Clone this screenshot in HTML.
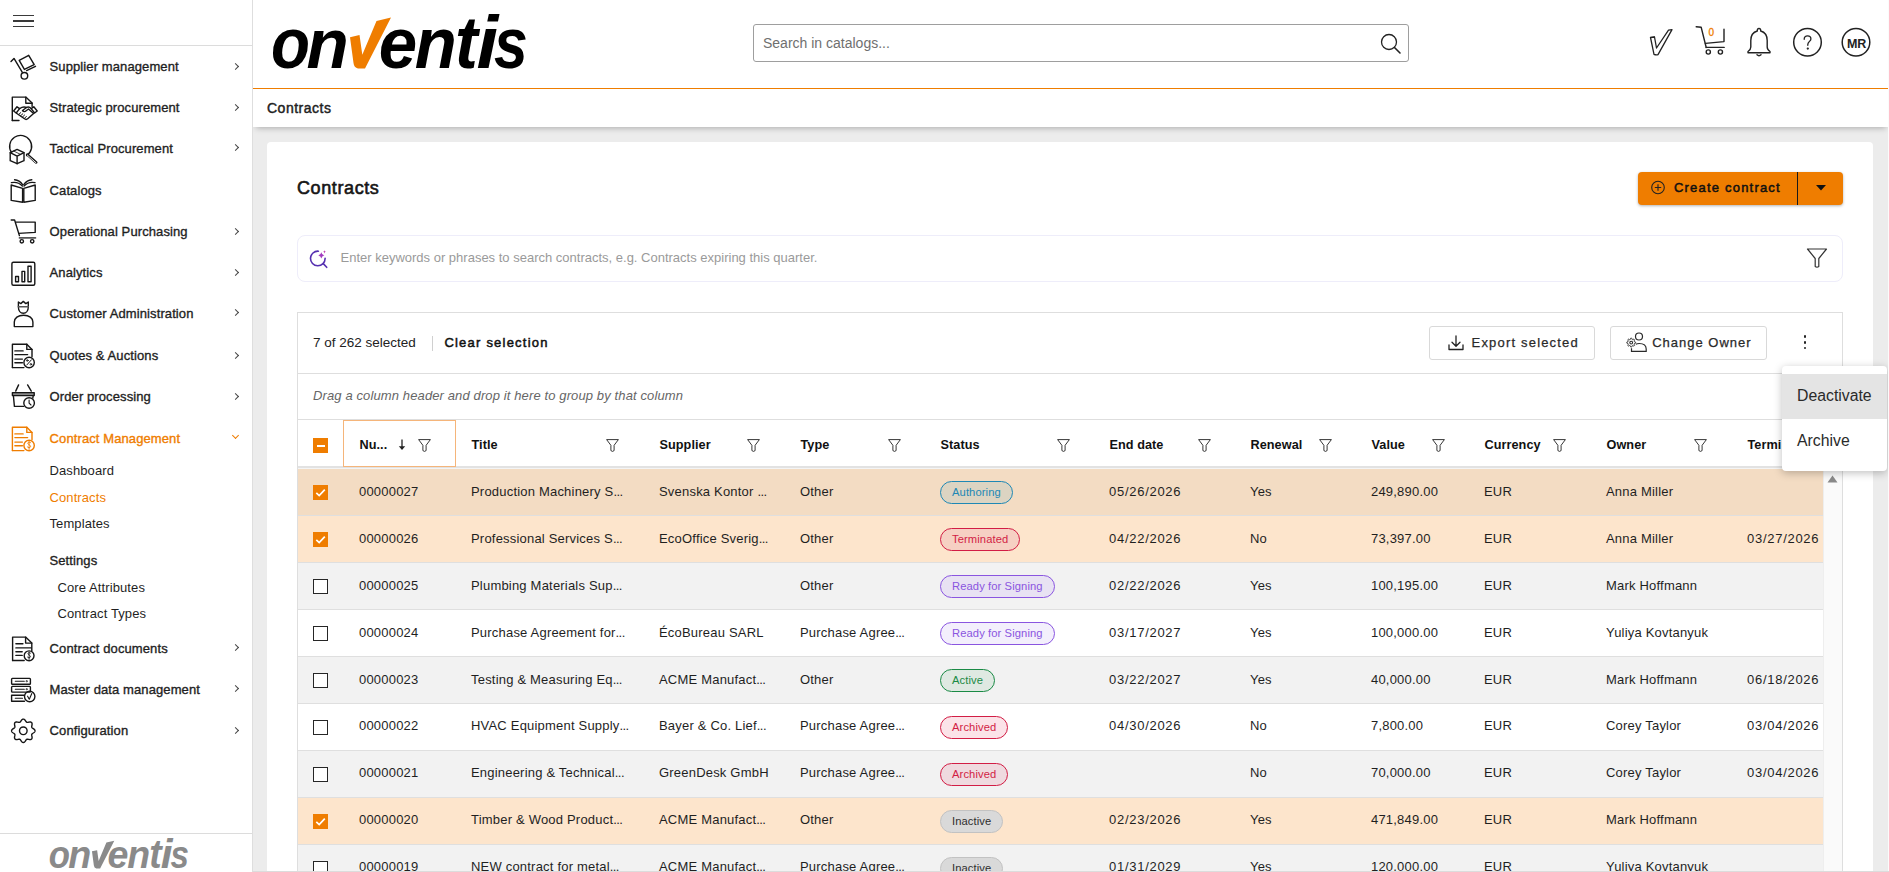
<!DOCTYPE html><html><head><meta charset="utf-8"><style>
*{box-sizing:border-box;margin:0;padding:0}
html,body{width:1889px;height:872px;overflow:hidden;background:#ececec;font-family:"Liberation Sans",sans-serif;color:#1f1f1f}
.abs{position:absolute;white-space:nowrap}
#side{position:absolute;left:0;top:0;width:253px;height:872px;background:#fff;border-right:1px solid #dedede;z-index:5}
.mi{position:absolute;left:49.6px;font-size:13px;white-space:nowrap;line-height:16px;color:#1f1f1f;-webkit-text-stroke:0.35px #1f1f1f;letter-spacing:0.1px}
.chev{position:absolute;left:233px;width:5px;height:5px;border-right:0.9px solid #444;border-top:0.9px solid #444;transform:rotate(45deg)}
.sub{position:absolute;left:49px;font-size:13px;white-space:nowrap;line-height:16px;color:#1f1f1f;letter-spacing:0.1px}
.ic{position:absolute;left:10px;width:28px;height:28px;overflow:visible}
.ic *{fill:none;stroke:#1f1f1f;stroke-width:1.3;stroke-linejoin:round;stroke-linecap:round}
#hdr{position:absolute;left:253px;top:0;width:1636px;height:89px;background:#fff;border-bottom:1px solid #ef7d00}
#crumb{position:absolute;left:253px;top:89px;width:1636px;height:38px;background:#fff;box-shadow:0 4px 6px -3px rgba(0,0,0,.28)}
#card{position:absolute;left:267px;top:142px;width:1606px;height:740px;background:#fff;border-radius:4px}
.hic *{fill:none;stroke:#222;stroke-width:1.5;stroke-linejoin:round;stroke-linecap:round}
.btn{position:absolute;border:1px solid #d9d9d9;border-radius:3px;background:#fff;font-size:13px;font-weight:bold;letter-spacing:0.8px;color:#1f1f1f;white-space:nowrap}
.th{position:absolute;top:0;height:46px;font-size:13px;font-weight:bold;line-height:46px;white-space:nowrap;color:#1f1f1f}
.flt{position:absolute;top:18px;width:13px;height:13px}
.flt path{fill:none;stroke:#333;stroke-width:1;stroke-linejoin:round}
.row{position:absolute;left:0;width:1526px;height:47px;border-top:1px solid #dcdcdc}
.td{position:absolute;top:0;line-height:46px;font-size:13px;letter-spacing:0.22px;white-space:nowrap;color:#1f1f1f}
.cb{position:absolute;left:16px;top:16px;width:15px;height:15px;border:1.5px solid #2a2a2a;background:#fff}
.cb.on{background:#ef7d00;border-color:#ef7d00}
.badge{position:absolute;top:12px;height:23px;border-radius:11.5px;border:1.3px solid;font-size:11.2px;line-height:21px;padding:0 11px;letter-spacing:0.1px;white-space:nowrap}
</style></head><body>
<div id="side">
<div class="abs" style="left:13px;top:14.5px;width:21px;height:1.6px;background:#3a3a3a"></div>
<div class="abs" style="left:13px;top:20px;width:21px;height:1.6px;background:#3a3a3a"></div>
<div class="abs" style="left:13px;top:25.5px;width:21px;height:1.6px;background:#3a3a3a"></div>
<div class="abs" style="left:0;top:45px;width:252px;height:1px;background:#dcdcdc"></div>
<div class="mi" style="top:59.2px">Supplier management</div>
<div class="chev" style="top:63.5px"></div>
<div class="mi" style="top:100.4px">Strategic procurement</div>
<div class="chev" style="top:104.7px"></div>
<div class="mi" style="top:141.0px">Tactical Procurement</div>
<div class="chev" style="top:145.3px"></div>
<div class="mi" style="top:182.9px">Catalogs</div>
<div class="mi" style="top:224.2px">Operational Purchasing</div>
<div class="chev" style="top:228.5px"></div>
<div class="mi" style="top:265.4px">Analytics</div>
<div class="chev" style="top:269.7px"></div>
<div class="mi" style="top:306.0px">Customer Administration</div>
<div class="chev" style="top:310.3px"></div>
<div class="mi" style="top:348.2px">Quotes & Auctions</div>
<div class="chev" style="top:352.5px"></div>
<div class="mi" style="top:389.4px">Order processing</div>
<div class="chev" style="top:393.7px"></div>
<div class="mi" style="top:430.5px;color:#ef7d00;-webkit-text-stroke:0.35px #ef7d00">Contract Management</div>
<div class="chev" style="top:432.8px;transform:rotate(135deg);border-color:#ef7d00"></div>
<div class="sub" style="top:463.0px;left:49.5px;color:#1f1f1f">Dashboard</div>
<div class="sub" style="top:489.9px;left:49.5px;color:#ef7d00">Contracts</div>
<div class="sub" style="top:516.0px;left:49.5px;color:#1f1f1f">Templates</div>
<div class="sub" style="top:553.1px;left:49.5px;color:#1f1f1f;-webkit-text-stroke:0.35px #1f1f1f">Settings</div>
<div class="sub" style="top:579.9px;left:57.5px;color:#1f1f1f">Core Attributes</div>
<div class="sub" style="top:606.2px;left:57.5px;color:#1f1f1f">Contract Types</div>
<div class="mi" style="top:640.7px">Contract documents</div>
<div class="chev" style="top:645.0px"></div>
<div class="mi" style="top:681.9px">Master data management</div>
<div class="chev" style="top:686.2px"></div>
<div class="mi" style="top:723.2px">Configuration</div>
<div class="chev" style="top:727.5px"></div>
<div class="abs" style="left:0;top:833px;width:252px;height:1px;background:#dcdcdc"></div>
<svg class="abs" style="left:0;top:0;width:253px;height:872px;pointer-events:none" viewBox="0 0 253 872"><g style="fill:none;stroke:#161616;stroke-width:1.4;stroke-linejoin:round;stroke-linecap:round"><path d="M11,61.6 L14,58.4 L22.2,72.2"/><circle cx="24.4" cy="75.8" r="3.3"/><path d="M26.6,70.6 L35.5,66.3"/><path d="M19.2,60.3 L28.7,55.3 L34.2,64.6 L24.4,69.4 Z"/><path d="M12.3,120.5 V97.1 H25.8 L32.1,103 V106.5"/><path d="M12.3,120.5 H19"/><path d="M25.8,97.1 V103.3 H32.1"/><path d="M13.6,111 L17,106.8 L19.6,108.6 L16.2,113 Z"/><path d="M37.2,111 L33.8,106.8 L31.2,108.6 L34.6,113 Z"/><path d="M19.6,108.6 C22,107 24,106.6 26.5,107.5 L22.5,110.5 C23.5,112 25,112 26.5,110.5 L28.5,109 L33.6,113.5 L28,118.5 C26.8,119.6 25.5,119.6 24.5,118.8 L16.5,113.2"/><path d="M26.5,107.5 C28,106.6 29.5,106.8 31.2,108.6"/><path d="M18.5,114.6 L20.8,112.6 M20.3,116 L22.8,113.8 M22.2,117.3 L24.6,115 M24.2,118.6 L26.4,116.4" style="stroke-width:1"/><path d="M11.6,152.6 A11,11 0 1 1 26.6,155.6"/><path d="M27.2,154.6 L36.2,162.4" style="stroke-width:2.6"/><path d="M27.4,155.2 L36.0,162.8" style="stroke:#fff;stroke-width:0.9"/><path d="M17.1,149.4 L24.0,152.7 V160.7 L17.1,163.7 L10.2,160.7 V152.7 Z"/><path d="M10.2,152.7 L17.1,156.1 L24.0,152.7 M17.1,156.1 V163.7"/><path d="M13.6,151 L20.6,154.4" style="stroke-width:0.8"/><path d="M11.2,185 L22.6,188.4 V202.2 L11.2,200.4 Z"/><path d="M35.2,185 L23.8,188.4 V202.2 L35.2,200.4 Z"/><path d="M11.4,182.6 C15.5,181.8 19.5,183 22.4,186"/><path d="M14.6,179.8 C18,180 20.8,182 22.6,184.6"/><path d="M35,182.6 C30.9,181.8 26.9,183 24,186"/><path d="M31.8,179.8 C28.4,180 25.6,182 23.8,184.6"/><path d="M11.2,220 H14.6 L19.4,235.6"/><path d="M15.7,222.1 H35.2 V232.4 L18.7,233.4"/><path d="M19.4,237.9 H35.5" style="stroke-width:1.6;stroke:#555"/><circle cx="21.8" cy="241.3" r="1.7"/><circle cx="32.2" cy="241.3" r="1.7"/><rect x="11.9" y="262.3" width="22.9" height="23" rx="1.5"/><rect x="15.6" y="276.5" width="2.9" height="5.2"/><rect x="22.0" y="271.4" width="2.7" height="10.3"/><rect x="28.0" y="266.3" width="3.1" height="15.4"/><path d="M18.4,307 V302 L20.8,303.6 L23.3,301.4 L25.8,303.6 L28.3,302 V307 C28.3,310.8 26,313.3 23.3,313.3 C20.6,313.3 18.4,310.8 18.4,307 Z"/><path d="M18.4,306.8 H28.3" style="stroke-width:1.6;stroke:#555"/><path d="M14.3,326.6 V322 C14.3,318 18,315.2 23.6,315.2 C29.2,315.2 32.9,318 32.9,322 V326.6 Z"/><path d="M12.4,367.6 V344.2 H26.8 L32,349.4 V356.8"/><path d="M12.4,367.6 H23.9"/><path d="M26.8,344.2 V349.4 H32"/><path d="M14.9,350.9 H23.1"/><path d="M14.9,354.6 H27.6"/><path d="M14.9,359.1 H22.4"/><path d="M14.9,362.8 H22.4"/><circle cx="29.1" cy="362.5" r="5.2"/><path d="M26.8,365 L31.4,359.8" style="stroke-width:1"/><circle cx="27.3" cy="360.5" r="0.8" style="stroke-width:0.9"/><circle cx="30.9" cy="364.3" r="0.8" style="stroke-width:0.9"/><path d="M18.6,384.9 L15.7,391.1"/><path d="M27.6,384.9 L31.3,391.1"/><path d="M12.4,392.6 H34.2 V395.6 H12.4 Z" style="fill:#888"/><path d="M13.4,395.8 L14.4,406.4 H23.6"/><path d="M33.2,395.8 L32.8,398"/><circle cx="29.1" cy="403" r="5.3"/><path d="M29.1,400 V403.2 L31,405" style="stroke-width:1.1"/><g style="stroke:#ef7d00"><path style="stroke:#ef7d00" d="M12.4,450.6 V427.2 H26.8 L32,432.4 V439.8"/><path style="stroke:#ef7d00" d="M12.4,450.6 H23.9"/><path style="stroke:#ef7d00" d="M26.8,427.2 V432.4 H32"/><path style="stroke:#ef7d00" d="M14.9,433.9 H23.1"/><path style="stroke:#ef7d00" d="M14.9,437.6 H27.6"/><path style="stroke:#ef7d00" d="M14.9,442.1 H22.4"/><path style="stroke:#ef7d00" d="M14.9,445.8 H22.4"/><circle cx="29.1" cy="445.5" r="5.2" style="stroke:#ef7d00"/><path d="M30.8,442.8 C30,441.8 27.6,442 27.8,443.4 C28,444.8 30.6,444.8 30.6,446.4 C30.6,447.9 28.2,448 27.4,447 M29.1,441.5 V449.4" style="stroke:#ef7d00;stroke-width:0.9"/></g><path d="M12.6,660.5 V637.1 H25.6 L31.8,643.1 V651"/><path d="M12.6,660.5 H24.2"/><path d="M25.6,637.1 V643.1 H31.8"/><path d="M15.9,643.7 H22.9"/><path d="M15.9,647.9 H31.1"/><path d="M15.9,651.7 H22.2"/><path d="M15.9,655.4 H22.2"/><circle cx="29.1" cy="655.8" r="4.9"/><path d="M30.6,653.2 C29.9,652.3 27.8,652.5 28,653.8 C28.2,655.1 30.4,655.1 30.4,656.6 C30.4,658 28.2,658.1 27.5,657.2 M29.1,652 V659.4" style="stroke-width:0.9"/><rect x="11.6" y="678.4" width="18.8" height="5.9" rx="0.8"/><rect x="11.6" y="686.4" width="18.8" height="5.7" rx="0.8"/><path d="M24.5,701.2 H11.6 V695.3 H24"/><path d="M15.3,681.3 H24.3 M15.3,689.2 H24.3 M15.3,698.3 H22.5" style="stroke-width:1.1"/><circle cx="26.7" cy="681.3" r="0.35"/><circle cx="26.7" cy="689.2" r="0.35"/><circle cx="29.7" cy="696.5" r="5.2"/><path d="M27.6,696.2 L29.3,699.2 L31.8,693.5" style="stroke-width:1.1"/><path d="M23.30,719.10 L23.67,719.15 L24.02,719.28 L24.37,719.49 L24.69,719.77 L25.00,720.10 L25.27,720.46 L25.53,720.83 L25.77,721.19 L25.99,721.53 L26.22,721.82 L26.45,722.06 L26.69,722.24 L26.96,722.35 L27.25,722.40 L27.59,722.39 L27.95,722.34 L28.35,722.26 L28.77,722.17 L29.22,722.09 L29.67,722.03 L30.12,722.01 L30.54,722.05 L30.94,722.14 L31.28,722.30 L31.57,722.53 L31.80,722.82 L31.96,723.16 L32.05,723.56 L32.09,723.98 L32.07,724.43 L32.01,724.88 L31.93,725.33 L31.84,725.75 L31.76,726.15 L31.71,726.51 L31.70,726.85 L31.75,727.14 L31.86,727.41 L32.04,727.65 L32.28,727.88 L32.57,728.11 L32.91,728.33 L33.27,728.57 L33.64,728.83 L34.00,729.10 L34.33,729.41 L34.61,729.73 L34.82,730.08 L34.95,730.43 L35.00,730.80 L34.95,731.17 L34.82,731.52 L34.61,731.87 L34.33,732.19 L34.00,732.50 L33.64,732.77 L33.27,733.03 L32.91,733.27 L32.57,733.49 L32.28,733.72 L32.04,733.95 L31.86,734.19 L31.75,734.46 L31.70,734.75 L31.71,735.09 L31.76,735.45 L31.84,735.85 L31.93,736.27 L32.01,736.72 L32.07,737.17 L32.09,737.62 L32.05,738.04 L31.96,738.44 L31.80,738.78 L31.57,739.07 L31.28,739.30 L30.94,739.46 L30.54,739.55 L30.12,739.59 L29.67,739.57 L29.22,739.51 L28.77,739.43 L28.35,739.34 L27.95,739.26 L27.59,739.21 L27.25,739.20 L26.96,739.25 L26.69,739.36 L26.45,739.54 L26.22,739.78 L25.99,740.07 L25.77,740.41 L25.53,740.77 L25.27,741.14 L25.00,741.50 L24.69,741.83 L24.37,742.11 L24.02,742.32 L23.67,742.45 L23.30,742.50 L22.93,742.45 L22.58,742.32 L22.23,742.11 L21.91,741.83 L21.60,741.50 L21.33,741.14 L21.07,740.77 L20.83,740.41 L20.61,740.07 L20.38,739.78 L20.15,739.54 L19.91,739.36 L19.64,739.25 L19.35,739.20 L19.01,739.21 L18.65,739.26 L18.25,739.34 L17.83,739.43 L17.38,739.51 L16.93,739.57 L16.48,739.59 L16.06,739.55 L15.66,739.46 L15.32,739.30 L15.03,739.07 L14.80,738.78 L14.64,738.44 L14.55,738.04 L14.51,737.62 L14.53,737.17 L14.59,736.72 L14.67,736.27 L14.76,735.85 L14.84,735.45 L14.89,735.09 L14.90,734.75 L14.85,734.46 L14.74,734.19 L14.56,733.95 L14.32,733.72 L14.03,733.49 L13.69,733.27 L13.33,733.03 L12.96,732.77 L12.60,732.50 L12.27,732.19 L11.99,731.87 L11.78,731.52 L11.65,731.17 L11.60,730.80 L11.65,730.43 L11.78,730.08 L11.99,729.73 L12.27,729.41 L12.60,729.10 L12.96,728.83 L13.33,728.57 L13.69,728.33 L14.03,728.11 L14.32,727.88 L14.56,727.65 L14.74,727.41 L14.85,727.14 L14.90,726.85 L14.89,726.51 L14.84,726.15 L14.76,725.75 L14.67,725.33 L14.59,724.88 L14.53,724.43 L14.51,723.98 L14.55,723.56 L14.64,723.16 L14.80,722.82 L15.03,722.53 L15.32,722.30 L15.66,722.14 L16.06,722.05 L16.48,722.01 L16.93,722.03 L17.38,722.09 L17.83,722.17 L18.25,722.26 L18.65,722.34 L19.01,722.39 L19.35,722.40 L19.64,722.35 L19.91,722.24 L20.15,722.06 L20.38,721.82 L20.61,721.53 L20.83,721.19 L21.07,720.83 L21.33,720.46 L21.60,720.10 L21.91,719.77 L22.23,719.49 L22.58,719.28 L22.93,719.15 Z"/><circle cx="23.3" cy="730.8" r="3.8"/></g></svg>
</div>
<div id="hdr">
<div class="abs" style="left:500px;top:24px;width:656px;height:38px;border:1px solid #9e9e9e;border-radius:3px;background:#fff"></div>
<div class="abs" style="left:510px;top:35px;font-size:14px;line-height:16px;color:#6f6f6f">Search in catalogs...</div>
<svg class="abs hic" style="left:1127px;top:33px;width:22px;height:22px" viewBox="0 0 22 22"><circle cx="9" cy="9" r="7.5" style="stroke-width:1.3"/><path d="M14.5 14.5 L20 20" style="stroke-width:1.6"/></svg>
</div>
<svg class="abs hic" style="left:1646px;top:26px;width:30px;height:32px" viewBox="0 0 30 32"><path d="M4.5 11.5 L8.5 11 L10.5 22 L22.5 4.2 L26 3.6 L12 28.6 Q10 29.2 8 28.3 Z" style="stroke-width:1.3"/><path d="M8.5 11 Q8 10.8 4.5 11.5" style="stroke-width:1.1"/></svg>
<svg class="abs hic" style="left:1694px;top:25px;width:34px;height:32px" viewBox="0 0 34 32"><path d="M2.2 1.8 L7.2 2.3 L12.2 22.5" style="stroke-width:1.4"/><path d="M11.4 18.4 L30 16.6 V4.2" style="stroke-width:1.4"/><path d="M12.2 22.4 H30.2" style="stroke-width:1.4"/><circle cx="14.3" cy="27" r="2.1" style="stroke-width:1.4"/><circle cx="26.4" cy="27" r="2.1" style="stroke-width:1.4"/></svg>
<div class="abs" style="left:1708.4px;top:28.3px;font-size:10px;line-height:10px;color:#ef7d00;-webkit-text-stroke:0.3px #ef7d00">0</div>
<svg class="abs hic" style="left:1745px;top:26px;width:28px;height:32px" viewBox="0 0 28 32"><path d="M14 2.5 C12.7 2.5 12.2 3.5 12.3 5 C8 6.2 5.8 9.8 5.8 14.5 V21 C5.8 23.5 4.3 24.7 3 25.5 V26.8 H25 V25.5 C23.7 24.7 22.2 23.5 22.2 21 V14.5 C22.2 9.8 20 6.2 15.7 5 C15.8 3.5 15.3 2.5 14 2.5 Z" style="stroke-width:1.4"/><path d="M12 28.8 Q14 30.6 16 28.8" style="stroke-width:1.4"/></svg>
<svg class="abs hic" style="left:1792px;top:27px;width:31px;height:31px" viewBox="0 0 31 31"><circle cx="15.5" cy="15.3" r="13.8" style="stroke-width:1.5"/><path d="M12.2 12.3 C12.2 10 13.6 8.8 15.5 8.8 C17.5 8.8 18.9 10.1 18.9 11.9 C18.9 14.3 15.8 14.6 15.8 17.6 V18.3" style="stroke-width:1.3"/><circle cx="15.8" cy="21.6" r="0.5" style="stroke-width:1.3"/></svg>
<svg class="abs hic" style="left:1841px;top:27px;width:31px;height:31px" viewBox="0 0 31 31"><circle cx="15" cy="15.3" r="13.8" style="stroke-width:1.5"/></svg>
<div class="abs" style="left:1845px;top:37.5px;width:23px;text-align:center;font-size:12.5px;line-height:13px;font-weight:bold;color:#222;letter-spacing:-0.3px">MR</div>
<div id="crumb"><div class="abs" style="left:14px;top:11px;font-size:14px;line-height:16px;color:#222;-webkit-text-stroke:0.45px #222;letter-spacing:0.5px">Contracts</div></div>
<div id="card">
</div>
<svg class="abs" style="left:0;top:0;width:1889px;height:872px;pointer-events:none;z-index:10" viewBox="0 0 1889 872"><g transform="translate(0,0) scale(1.0)"><text transform="translate(270.89,68.18) scale(0.6382,0.7218)" font-family="Liberation Sans" font-weight="bold" font-style="italic" font-size="100" fill="#000">o</text><text transform="translate(306.52,68.00) scale(0.6909,0.7130)" font-family="Liberation Sans" font-weight="bold" font-style="italic" font-size="100" fill="#000">n</text><text transform="translate(378.73,68.09) scale(0.6900,0.7145)" font-family="Liberation Sans" font-weight="bold" font-style="italic" font-size="100" fill="#000">e</text><text transform="translate(414.63,68.00) scale(0.6873,0.7130)" font-family="Liberation Sans" font-weight="bold" font-style="italic" font-size="100" fill="#000">n</text><text transform="translate(455.06,68.05) scale(0.6848,0.7485)" font-family="Liberation Sans" font-weight="bold" font-style="italic" font-size="100" fill="#000">t</text><text transform="translate(476.44,68.00) scale(0.7815,0.7397)" font-family="Liberation Sans" font-weight="bold" font-style="italic" font-size="100" fill="#000">i</text><text transform="translate(494.09,68.09) scale(0.6078,0.7145)" font-family="Liberation Sans" font-weight="bold" font-style="italic" font-size="100" fill="#000">s</text><path d="M350,37.2 L359.5,35 L362.3,54.7 L376.5,21 L391,17.5 L365,68.5 L358,68.5 Q354,67.5 353.5,63 Z" fill="#ef7d00"/></g><g transform="translate(-98.8,831.1) scale(0.545)"><text transform="translate(270.89,68.18) scale(0.6382,0.7218)" font-family="Liberation Sans" font-weight="bold" font-style="italic" font-size="100" fill="#8a8a8a">o</text><text transform="translate(306.52,68.00) scale(0.6909,0.7130)" font-family="Liberation Sans" font-weight="bold" font-style="italic" font-size="100" fill="#8a8a8a">n</text><text transform="translate(378.73,68.09) scale(0.6900,0.7145)" font-family="Liberation Sans" font-weight="bold" font-style="italic" font-size="100" fill="#8a8a8a">e</text><text transform="translate(414.63,68.00) scale(0.6873,0.7130)" font-family="Liberation Sans" font-weight="bold" font-style="italic" font-size="100" fill="#8a8a8a">n</text><text transform="translate(455.06,68.05) scale(0.6848,0.7485)" font-family="Liberation Sans" font-weight="bold" font-style="italic" font-size="100" fill="#8a8a8a">t</text><text transform="translate(476.44,68.00) scale(0.7815,0.7397)" font-family="Liberation Sans" font-weight="bold" font-style="italic" font-size="100" fill="#8a8a8a">i</text><text transform="translate(494.09,68.09) scale(0.6078,0.7145)" font-family="Liberation Sans" font-weight="bold" font-style="italic" font-size="100" fill="#8a8a8a">s</text><path d="M350,37.2 L359.5,35 L362.3,54.7 L376.5,21 L391,17.5 L365,68.5 L358,68.5 Q354,67.5 353.5,63 Z" fill="#8a8a8a"/></g></svg>
<div class="abs" style="left:297px;top:178.66px;font-size:18px;line-height:18px;color:#161616;-webkit-text-stroke:0.6px #161616;letter-spacing:0.6px">Contracts</div>
<div class="abs" style="left:1638px;top:172px;width:205px;height:33px;background:#ef7d00;border-radius:4px;box-shadow:0 1px 3px rgba(0,0,0,.3)"></div>
<div class="abs" style="left:1797px;top:172px;width:1px;height:33px;background:#1a1a1a"></div>
<svg class="abs" style="left:1650px;top:180px;width:16px;height:16px" viewBox="0 0 16 16"><circle cx="8" cy="7.5" r="6.3" fill="none" stroke="#222" stroke-width="1.1"/><path d="M8 4.3 V10.7 M4.8 7.5 H11.2" stroke="#222" stroke-width="1.1"/></svg>
<div class="abs" style="left:1674px;top:180.80px;font-size:13px;line-height:13px;letter-spacing:1.2px;color:#111;-webkit-text-stroke:0.5px #111">Create contract</div>
<svg class="abs" style="left:1816px;top:185px;width:10px;height:6px" viewBox="0 0 10 6"><path d="M0 0 H10 L5 5.5 Z" fill="#111"/></svg>
<div class="abs" style="left:297px;top:235px;width:1546px;height:47px;border:1px solid #eeedfa;border-radius:8px;background:#fff"></div>
<svg class="abs" style="left:300px;top:240px;width:40px;height:35px" viewBox="300 240 40 35"><path d="M318.4,251.2 A7.3,7.3 0 1 0 325.1,258.3" fill="none" stroke="#5530b0" stroke-width="1.6" stroke-linecap="round"/><path d="M323.5,263.9 L326.7,267.3" stroke="#5530b0" stroke-width="1.6" stroke-linecap="round"/><path d="M321.3,252.2 Q321.7,255 324.4,255.4 Q321.7,255.8 321.3,258.6 Q320.9,255.8 318.2,255.4 Q320.9,255 321.3,252.2 Z" fill="#a23cc0"/><path d="M324.5,250.2 Q324.7,251.6 325.8,251.8 Q324.7,252 324.5,253.4 Q324.3,252 323.2,251.8 Q324.3,251.6 324.5,250.2 Z" fill="#c040b0"/></svg>
<div class="abs" style="left:340.5px;top:250.80px;font-size:13px;line-height:13px;color:#9a9a9a">Enter keywords or phrases to search contracts, e.g. Contracts expiring this quarter.</div>
<svg class="abs" style="left:1806px;top:247px;width:22px;height:22px" viewBox="0 0 22 22"><path d="M1.5 2 H20.5 L12.8 11.5 V19.5 Q11 20.8 9.2 19.5 V11.5 Z" fill="none" stroke="#333" stroke-width="1.2" stroke-linejoin="round"/></svg>
<div class="abs" style="left:297px;top:312px;width:1546px;height:600px;border:1px solid #dedede;background:#fff"></div>
<div class="abs" style="left:298px;top:373px;width:1544px;height:1px;background:#dedede"></div>
<div class="abs" style="left:298px;top:419px;width:1544px;height:1px;background:#dedede"></div>
<div class="abs" style="left:313px;top:336.17px;font-size:13.5px;line-height:13.5px;color:#222">7 of 262 selected</div>
<div class="abs" style="left:432px;top:336px;width:1px;height:15px;background:#d0d0d0"></div>
<div class="abs" style="left:444.4px;top:335.80px;font-size:13px;line-height:13px;letter-spacing:1.22px;color:#111;-webkit-text-stroke:0.5px #111">Clear selection</div>
<div class="btn" style="left:1429px;top:326px;width:166px;height:34px"></div>
<svg class="abs" style="left:1447px;top:334px;width:18px;height:18px" viewBox="0 0 18 18"><path d="M9 2 V12 M5 8.3 L9 12.3 L13 8.3" fill="none" stroke="#222" stroke-width="1.3" stroke-linecap="round" stroke-linejoin="round"/><path d="M2 11 V15.5 H16 V11" fill="none" stroke="#222" stroke-width="1.3" stroke-linecap="round" stroke-linejoin="round"/></svg>
<div class="abs" style="left:1471.6px;top:335.80px;font-size:13px;line-height:13px;letter-spacing:1.18px;color:#2a2a2a;-webkit-text-stroke:0.25px #2a2a2a">Export selected</div>
<div class="btn" style="left:1610px;top:326px;width:157px;height:34px"></div>
<svg class="abs" style="left:1620px;top:330px;width:30px;height:26px" viewBox="1620 330 30 26"><g fill="none" stroke="#2a2a2a" stroke-width="1.2"><circle cx="1639" cy="336.5" r="3.5"/><path d="M1631.5,348.2 V351.4 H1646.2 V349 C1646.2,345.8 1643.6,343.5 1639.2,343.5 C1637.6,343.5 1636.6,343.8 1635.8,344.2"/><path stroke-width="1" d="M1635.60,342.60 L1635.59,342.89 L1635.51,343.17 L1634.98,343.35 L1634.44,343.47 L1634.33,343.66 L1634.25,343.86 L1634.16,344.06 L1634.10,344.27 L1634.40,344.74 L1634.65,345.25 L1634.51,345.50 L1634.31,345.71 L1634.10,345.91 L1633.85,346.05 L1633.34,345.80 L1632.87,345.50 L1632.66,345.56 L1632.46,345.65 L1632.26,345.73 L1632.07,345.84 L1631.95,346.38 L1631.77,346.91 L1631.49,346.99 L1631.20,347.00 L1630.91,346.99 L1630.63,346.91 L1630.45,346.38 L1630.33,345.84 L1630.14,345.73 L1629.94,345.65 L1629.74,345.56 L1629.53,345.50 L1629.06,345.80 L1628.55,346.05 L1628.30,345.91 L1628.09,345.71 L1627.89,345.50 L1627.75,345.25 L1628.00,344.74 L1628.30,344.27 L1628.24,344.06 L1628.15,343.86 L1628.07,343.66 L1627.96,343.47 L1627.42,343.35 L1626.89,343.17 L1626.81,342.89 L1626.80,342.60 L1626.81,342.31 L1626.89,342.03 L1627.42,341.85 L1627.96,341.73 L1628.07,341.54 L1628.15,341.34 L1628.24,341.14 L1628.30,340.93 L1628.00,340.46 L1627.75,339.95 L1627.89,339.70 L1628.09,339.49 L1628.30,339.29 L1628.55,339.15 L1629.06,339.40 L1629.53,339.70 L1629.74,339.64 L1629.94,339.55 L1630.14,339.47 L1630.33,339.36 L1630.45,338.82 L1630.63,338.29 L1630.91,338.21 L1631.20,338.20 L1631.49,338.21 L1631.77,338.29 L1631.95,338.82 L1632.07,339.36 L1632.26,339.47 L1632.46,339.55 L1632.66,339.64 L1632.87,339.70 L1633.34,339.40 L1633.85,339.15 L1634.10,339.29 L1634.31,339.49 L1634.51,339.70 L1634.65,339.95 L1634.40,340.46 L1634.10,340.93 L1634.16,341.14 L1634.25,341.34 L1634.33,341.54 L1634.44,341.73 L1634.98,341.85 L1635.51,342.03 L1635.59,342.31 Z"/><circle cx="1631.2" cy="342.6" r="1.4" stroke-width="1.1"/></g></svg>
<div class="abs" style="left:1652.2px;top:335.80px;font-size:13px;line-height:13px;letter-spacing:1.0px;color:#2a2a2a;-webkit-text-stroke:0.25px #2a2a2a">Change Owner</div>
<div class="abs" style="left:1803.7px;top:335.3px;width:2.6px;height:2.6px;border-radius:50%;background:#222"></div>
<div class="abs" style="left:1803.7px;top:341.1px;width:2.6px;height:2.6px;border-radius:50%;background:#222"></div>
<div class="abs" style="left:1803.7px;top:346.8px;width:2.6px;height:2.6px;border-radius:50%;background:#222"></div>
<div class="abs" style="left:313px;top:388.60px;font-size:13px;line-height:13px;font-style:italic;color:#666;letter-spacing:0.12px">Drag a column header and drop it here to group by that column</div>
<div class="abs" style="left:298px;top:420px;width:1525px;height:46px;background:#fff"></div>
<div class="abs" style="left:298px;top:466px;width:1525px;height:2px;background:#e2e2e2"></div>
<div class="abs" style="left:298px;top:468px;width:1525px;height:1px;background:#f4f4f4"></div>
<div class="abs" style="left:343px;top:420px;width:113px;height:47px;border:1px solid #f5b57a"></div>
<div class="abs" style="left:313px;top:438px;width:15px;height:15px;background:#ef7d00"></div>
<div class="abs" style="left:316.5px;top:444.5px;width:8px;height:2px;background:#fff"></div>
<div class="abs" style="left:359.5px;top:439.25px;font-size:12.7px;line-height:12.7px;font-weight:bold;color:#111;letter-spacing:0.05px">Nu...</div>
<svg class="abs" style="left:417.6px;top:439px;width:13px;height:13.5px" viewBox="0 0 13 13.5"><path d="M0.6 0.6 H12.4 L8.1 6.3 V11.6 Q6.5 13.2 4.9 11.6 V6.3 Z" fill="none" stroke="#2b2b2b" stroke-width="0.95" stroke-linejoin="round"/></svg>
<div class="abs" style="left:471.5px;top:439.25px;font-size:12.7px;line-height:12.7px;font-weight:bold;color:#111;letter-spacing:0.05px">Title</div>
<svg class="abs" style="left:605.6px;top:439px;width:13px;height:13.5px" viewBox="0 0 13 13.5"><path d="M0.6 0.6 H12.4 L8.1 6.3 V11.6 Q6.5 13.2 4.9 11.6 V6.3 Z" fill="none" stroke="#2b2b2b" stroke-width="0.95" stroke-linejoin="round"/></svg>
<div class="abs" style="left:659.5px;top:439.25px;font-size:12.7px;line-height:12.7px;font-weight:bold;color:#111;letter-spacing:0.05px">Supplier</div>
<svg class="abs" style="left:746.6px;top:439px;width:13px;height:13.5px" viewBox="0 0 13 13.5"><path d="M0.6 0.6 H12.4 L8.1 6.3 V11.6 Q6.5 13.2 4.9 11.6 V6.3 Z" fill="none" stroke="#2b2b2b" stroke-width="0.95" stroke-linejoin="round"/></svg>
<div class="abs" style="left:800.5px;top:439.25px;font-size:12.7px;line-height:12.7px;font-weight:bold;color:#111;letter-spacing:0.05px">Type</div>
<svg class="abs" style="left:887.6px;top:439px;width:13px;height:13.5px" viewBox="0 0 13 13.5"><path d="M0.6 0.6 H12.4 L8.1 6.3 V11.6 Q6.5 13.2 4.9 11.6 V6.3 Z" fill="none" stroke="#2b2b2b" stroke-width="0.95" stroke-linejoin="round"/></svg>
<div class="abs" style="left:940.5px;top:439.25px;font-size:12.7px;line-height:12.7px;font-weight:bold;color:#111;letter-spacing:0.05px">Status</div>
<svg class="abs" style="left:1056.6px;top:439px;width:13px;height:13.5px" viewBox="0 0 13 13.5"><path d="M0.6 0.6 H12.4 L8.1 6.3 V11.6 Q6.5 13.2 4.9 11.6 V6.3 Z" fill="none" stroke="#2b2b2b" stroke-width="0.95" stroke-linejoin="round"/></svg>
<div class="abs" style="left:1109.5px;top:439.25px;font-size:12.7px;line-height:12.7px;font-weight:bold;color:#111;letter-spacing:0.05px">End date</div>
<svg class="abs" style="left:1197.6px;top:439px;width:13px;height:13.5px" viewBox="0 0 13 13.5"><path d="M0.6 0.6 H12.4 L8.1 6.3 V11.6 Q6.5 13.2 4.9 11.6 V6.3 Z" fill="none" stroke="#2b2b2b" stroke-width="0.95" stroke-linejoin="round"/></svg>
<div class="abs" style="left:1250.5px;top:439.25px;font-size:12.7px;line-height:12.7px;font-weight:bold;color:#111;letter-spacing:0.05px">Renewal</div>
<svg class="abs" style="left:1318.6px;top:439px;width:13px;height:13.5px" viewBox="0 0 13 13.5"><path d="M0.6 0.6 H12.4 L8.1 6.3 V11.6 Q6.5 13.2 4.9 11.6 V6.3 Z" fill="none" stroke="#2b2b2b" stroke-width="0.95" stroke-linejoin="round"/></svg>
<div class="abs" style="left:1371.5px;top:439.25px;font-size:12.7px;line-height:12.7px;font-weight:bold;color:#111;letter-spacing:0.05px">Value</div>
<svg class="abs" style="left:1431.6px;top:439px;width:13px;height:13.5px" viewBox="0 0 13 13.5"><path d="M0.6 0.6 H12.4 L8.1 6.3 V11.6 Q6.5 13.2 4.9 11.6 V6.3 Z" fill="none" stroke="#2b2b2b" stroke-width="0.95" stroke-linejoin="round"/></svg>
<div class="abs" style="left:1484.5px;top:439.25px;font-size:12.7px;line-height:12.7px;font-weight:bold;color:#111;letter-spacing:0.05px">Currency</div>
<svg class="abs" style="left:1552.6px;top:439px;width:13px;height:13.5px" viewBox="0 0 13 13.5"><path d="M0.6 0.6 H12.4 L8.1 6.3 V11.6 Q6.5 13.2 4.9 11.6 V6.3 Z" fill="none" stroke="#2b2b2b" stroke-width="0.95" stroke-linejoin="round"/></svg>
<div class="abs" style="left:1606.5px;top:439.25px;font-size:12.7px;line-height:12.7px;font-weight:bold;color:#111;letter-spacing:0.05px">Owner</div>
<svg class="abs" style="left:1693.6px;top:439px;width:13px;height:13.5px" viewBox="0 0 13 13.5"><path d="M0.6 0.6 H12.4 L8.1 6.3 V11.6 Q6.5 13.2 4.9 11.6 V6.3 Z" fill="none" stroke="#2b2b2b" stroke-width="0.95" stroke-linejoin="round"/></svg>
<div class="abs" style="left:1747.5px;top:439.25px;font-size:12.7px;line-height:12.7px;font-weight:bold;color:#111;letter-spacing:0.05px">Termi</div>
<svg class="abs" style="left:397px;top:439px;width:10px;height:12px" viewBox="0 0 10 12"><path d="M5 0.5 V10" stroke="#222" stroke-width="1.3"/><path d="M1.8 7.2 L5 11 L8.2 7.2 Z" fill="#222"/></svg>
<div class="abs" style="left:298px;top:469px;width:1525px;height:46px;background:#f3dcc3"></div>
<div class="abs" style="left:298px;top:515px;width:1525px;height:1px;background:rgba(0,0,0,0.125)"></div>
<div class="abs" style="left:313px;top:484.5px;width:15px;height:15px;background:#ef7d00"></div>
<svg class="abs" style="left:313px;top:484.5px;width:15px;height:15px" viewBox="0 0 15 15"><path d="M3.3 7.8 L6.2 10.6 L11.8 4.6" fill="none" stroke="#fff" stroke-width="1.7"/></svg>
<div class="abs" style="left:359px;top:485.10px;font-size:13px;line-height:13px;letter-spacing:0.2px;color:#1f1f1f">00000027</div>
<div class="abs" style="left:471px;top:485.10px;font-size:13px;line-height:13px;letter-spacing:0.2px;color:#1f1f1f">Production Machinery S<span style="letter-spacing:-0.6px">..</span>.</div>
<div class="abs" style="left:659px;top:485.10px;font-size:13px;line-height:13px;letter-spacing:0.2px;color:#1f1f1f">Svenska Kontor <span style="letter-spacing:-0.6px">..</span>.</div>
<div class="abs" style="left:800px;top:485.10px;font-size:13px;line-height:13px;letter-spacing:0.2px;color:#1f1f1f">Other</div>
<div class="abs" style="left:1109px;top:485.10px;font-size:13px;line-height:13px;letter-spacing:0.72px;color:#1f1f1f">05/26/2026</div>
<div class="abs" style="left:1250px;top:485.10px;font-size:13px;line-height:13px;letter-spacing:0.2px;color:#1f1f1f">Yes</div>
<div class="abs" style="left:1371px;top:485.10px;font-size:13px;line-height:13px;letter-spacing:0.2px;color:#1f1f1f">249,890.00</div>
<div class="abs" style="left:1484px;top:485.10px;font-size:13px;line-height:13px;letter-spacing:0.2px;color:#1f1f1f">EUR</div>
<div class="abs" style="left:1606px;top:485.10px;font-size:13px;line-height:13px;letter-spacing:0.2px;color:#1f1f1f">Anna Miller</div>
<div class="badge" style="left:940px;top:481px;color:#1e88b5;border-color:#1e88b5;background:#dcd4c2">Authoring</div>
<div class="abs" style="left:298px;top:516px;width:1525px;height:46px;background:#fde5cc"></div>
<div class="abs" style="left:298px;top:562px;width:1525px;height:1px;background:rgba(0,0,0,0.125)"></div>
<div class="abs" style="left:313px;top:531.5px;width:15px;height:15px;background:#ef7d00"></div>
<svg class="abs" style="left:313px;top:531.5px;width:15px;height:15px" viewBox="0 0 15 15"><path d="M3.3 7.8 L6.2 10.6 L11.8 4.6" fill="none" stroke="#fff" stroke-width="1.7"/></svg>
<div class="abs" style="left:359px;top:532.10px;font-size:13px;line-height:13px;letter-spacing:0.2px;color:#1f1f1f">00000026</div>
<div class="abs" style="left:471px;top:532.10px;font-size:13px;line-height:13px;letter-spacing:0.2px;color:#1f1f1f">Professional Services S<span style="letter-spacing:-0.6px">..</span>.</div>
<div class="abs" style="left:659px;top:532.10px;font-size:13px;line-height:13px;letter-spacing:0.2px;color:#1f1f1f">EcoOffice Sverig<span style="letter-spacing:-0.6px">..</span>.</div>
<div class="abs" style="left:800px;top:532.10px;font-size:13px;line-height:13px;letter-spacing:0.2px;color:#1f1f1f">Other</div>
<div class="abs" style="left:1109px;top:532.10px;font-size:13px;line-height:13px;letter-spacing:0.72px;color:#1f1f1f">04/22/2026</div>
<div class="abs" style="left:1250px;top:532.10px;font-size:13px;line-height:13px;letter-spacing:0.2px;color:#1f1f1f">No</div>
<div class="abs" style="left:1371px;top:532.10px;font-size:13px;line-height:13px;letter-spacing:0.2px;color:#1f1f1f">73,397.00</div>
<div class="abs" style="left:1484px;top:532.10px;font-size:13px;line-height:13px;letter-spacing:0.2px;color:#1f1f1f">EUR</div>
<div class="abs" style="left:1606px;top:532.10px;font-size:13px;line-height:13px;letter-spacing:0.2px;color:#1f1f1f">Anna Miller</div>
<div class="abs" style="left:1747px;top:532.10px;font-size:13px;line-height:13px;letter-spacing:0.72px;color:#1f1f1f">03/27/2026</div>
<div class="badge" style="left:940px;top:528px;color:#d21d45;border-color:#d21d45;background:#f6d0c3">Terminated</div>
<div class="abs" style="left:298px;top:563px;width:1525px;height:46px;background:#f2f2f2"></div>
<div class="abs" style="left:298px;top:609px;width:1525px;height:1px;background:rgba(0,0,0,0.125)"></div>
<div class="abs" style="left:313px;top:578.5px;width:15px;height:15px;border:1.5px solid #262626;background:#fff"></div>
<div class="abs" style="left:359px;top:579.10px;font-size:13px;line-height:13px;letter-spacing:0.2px;color:#1f1f1f">00000025</div>
<div class="abs" style="left:471px;top:579.10px;font-size:13px;line-height:13px;letter-spacing:0.2px;color:#1f1f1f">Plumbing Materials Sup<span style="letter-spacing:-0.6px">..</span>.</div>
<div class="abs" style="left:800px;top:579.10px;font-size:13px;line-height:13px;letter-spacing:0.2px;color:#1f1f1f">Other</div>
<div class="abs" style="left:1109px;top:579.10px;font-size:13px;line-height:13px;letter-spacing:0.72px;color:#1f1f1f">02/22/2026</div>
<div class="abs" style="left:1250px;top:579.10px;font-size:13px;line-height:13px;letter-spacing:0.2px;color:#1f1f1f">Yes</div>
<div class="abs" style="left:1371px;top:579.10px;font-size:13px;line-height:13px;letter-spacing:0.2px;color:#1f1f1f">100,195.00</div>
<div class="abs" style="left:1484px;top:579.10px;font-size:13px;line-height:13px;letter-spacing:0.2px;color:#1f1f1f">EUR</div>
<div class="abs" style="left:1606px;top:579.10px;font-size:13px;line-height:13px;letter-spacing:0.2px;color:#1f1f1f">Mark Hoffmann</div>
<div class="badge" style="left:940px;top:575px;color:#8a55e0;border-color:#8a55e0;background:#e8e2f3">Ready for Signing</div>
<div class="abs" style="left:298px;top:610px;width:1525px;height:46px;background:#ffffff"></div>
<div class="abs" style="left:298px;top:656px;width:1525px;height:1px;background:rgba(0,0,0,0.125)"></div>
<div class="abs" style="left:313px;top:625.5px;width:15px;height:15px;border:1.5px solid #262626;background:#fff"></div>
<div class="abs" style="left:359px;top:626.10px;font-size:13px;line-height:13px;letter-spacing:0.2px;color:#1f1f1f">00000024</div>
<div class="abs" style="left:471px;top:626.10px;font-size:13px;line-height:13px;letter-spacing:0.2px;color:#1f1f1f">Purchase Agreement for<span style="letter-spacing:-0.6px">..</span>.</div>
<div class="abs" style="left:659px;top:626.10px;font-size:13px;line-height:13px;letter-spacing:0.2px;color:#1f1f1f">ÉcoBureau SARL</div>
<div class="abs" style="left:800px;top:626.10px;font-size:13px;line-height:13px;letter-spacing:0.2px;color:#1f1f1f">Purchase Agree<span style="letter-spacing:-0.6px">..</span>.</div>
<div class="abs" style="left:1109px;top:626.10px;font-size:13px;line-height:13px;letter-spacing:0.72px;color:#1f1f1f">03/17/2027</div>
<div class="abs" style="left:1250px;top:626.10px;font-size:13px;line-height:13px;letter-spacing:0.2px;color:#1f1f1f">Yes</div>
<div class="abs" style="left:1371px;top:626.10px;font-size:13px;line-height:13px;letter-spacing:0.2px;color:#1f1f1f">100,000.00</div>
<div class="abs" style="left:1484px;top:626.10px;font-size:13px;line-height:13px;letter-spacing:0.2px;color:#1f1f1f">EUR</div>
<div class="abs" style="left:1606px;top:626.10px;font-size:13px;line-height:13px;letter-spacing:0.2px;color:#1f1f1f">Yuliya Kovtanyuk</div>
<div class="badge" style="left:940px;top:622px;color:#8a55e0;border-color:#8a55e0;background:#f3effc">Ready for Signing</div>
<div class="abs" style="left:298px;top:657px;width:1525px;height:46px;background:#f2f2f2"></div>
<div class="abs" style="left:298px;top:703px;width:1525px;height:1px;background:rgba(0,0,0,0.125)"></div>
<div class="abs" style="left:313px;top:672.5px;width:15px;height:15px;border:1.5px solid #262626;background:#fff"></div>
<div class="abs" style="left:359px;top:673.10px;font-size:13px;line-height:13px;letter-spacing:0.2px;color:#1f1f1f">00000023</div>
<div class="abs" style="left:471px;top:673.10px;font-size:13px;line-height:13px;letter-spacing:0.2px;color:#1f1f1f">Testing &amp; Measuring Eq<span style="letter-spacing:-0.6px">..</span>.</div>
<div class="abs" style="left:659px;top:673.10px;font-size:13px;line-height:13px;letter-spacing:0.2px;color:#1f1f1f">ACME Manufact<span style="letter-spacing:-0.6px">..</span>.</div>
<div class="abs" style="left:800px;top:673.10px;font-size:13px;line-height:13px;letter-spacing:0.2px;color:#1f1f1f">Other</div>
<div class="abs" style="left:1109px;top:673.10px;font-size:13px;line-height:13px;letter-spacing:0.72px;color:#1f1f1f">03/22/2027</div>
<div class="abs" style="left:1250px;top:673.10px;font-size:13px;line-height:13px;letter-spacing:0.2px;color:#1f1f1f">Yes</div>
<div class="abs" style="left:1371px;top:673.10px;font-size:13px;line-height:13px;letter-spacing:0.2px;color:#1f1f1f">40,000.00</div>
<div class="abs" style="left:1484px;top:673.10px;font-size:13px;line-height:13px;letter-spacing:0.2px;color:#1f1f1f">EUR</div>
<div class="abs" style="left:1606px;top:673.10px;font-size:13px;line-height:13px;letter-spacing:0.2px;color:#1f1f1f">Mark Hoffmann</div>
<div class="abs" style="left:1747px;top:673.10px;font-size:13px;line-height:13px;letter-spacing:0.72px;color:#1f1f1f">06/18/2026</div>
<div class="badge" style="left:940px;top:669px;color:#1a8a45;border-color:#1a8a45;background:#dfe9e2">Active</div>
<div class="abs" style="left:298px;top:704px;width:1525px;height:46px;background:#ffffff"></div>
<div class="abs" style="left:298px;top:750px;width:1525px;height:1px;background:rgba(0,0,0,0.125)"></div>
<div class="abs" style="left:313px;top:719.5px;width:15px;height:15px;border:1.5px solid #262626;background:#fff"></div>
<div class="abs" style="left:359px;top:719.20px;font-size:13px;line-height:13px;letter-spacing:0.2px;color:#1f1f1f">00000022</div>
<div class="abs" style="left:471px;top:719.20px;font-size:13px;line-height:13px;letter-spacing:0.2px;color:#1f1f1f">HVAC Equipment Supply<span style="letter-spacing:-0.6px">..</span>.</div>
<div class="abs" style="left:659px;top:719.20px;font-size:13px;line-height:13px;letter-spacing:0.2px;color:#1f1f1f">Bayer &amp; Co. Lief<span style="letter-spacing:-0.6px">..</span>.</div>
<div class="abs" style="left:800px;top:719.20px;font-size:13px;line-height:13px;letter-spacing:0.2px;color:#1f1f1f">Purchase Agree<span style="letter-spacing:-0.6px">..</span>.</div>
<div class="abs" style="left:1109px;top:719.20px;font-size:13px;line-height:13px;letter-spacing:0.72px;color:#1f1f1f">04/30/2026</div>
<div class="abs" style="left:1250px;top:719.20px;font-size:13px;line-height:13px;letter-spacing:0.2px;color:#1f1f1f">No</div>
<div class="abs" style="left:1371px;top:719.20px;font-size:13px;line-height:13px;letter-spacing:0.2px;color:#1f1f1f">7,800.00</div>
<div class="abs" style="left:1484px;top:719.20px;font-size:13px;line-height:13px;letter-spacing:0.2px;color:#1f1f1f">EUR</div>
<div class="abs" style="left:1606px;top:719.20px;font-size:13px;line-height:13px;letter-spacing:0.2px;color:#1f1f1f">Corey Taylor</div>
<div class="abs" style="left:1747px;top:719.20px;font-size:13px;line-height:13px;letter-spacing:0.72px;color:#1f1f1f">03/04/2026</div>
<div class="badge" style="left:940px;top:716px;color:#d21d45;border-color:#d21d45;background:#fbe3e8">Archived</div>
<div class="abs" style="left:298px;top:751px;width:1525px;height:46px;background:#f2f2f2"></div>
<div class="abs" style="left:298px;top:797px;width:1525px;height:1px;background:rgba(0,0,0,0.125)"></div>
<div class="abs" style="left:313px;top:766.5px;width:15px;height:15px;border:1.5px solid #262626;background:#fff"></div>
<div class="abs" style="left:359px;top:766.20px;font-size:13px;line-height:13px;letter-spacing:0.2px;color:#1f1f1f">00000021</div>
<div class="abs" style="left:471px;top:766.20px;font-size:13px;line-height:13px;letter-spacing:0.2px;color:#1f1f1f">Engineering &amp; Technical<span style="letter-spacing:-0.6px">..</span>.</div>
<div class="abs" style="left:659px;top:766.20px;font-size:13px;line-height:13px;letter-spacing:0.2px;color:#1f1f1f">GreenDesk GmbH</div>
<div class="abs" style="left:800px;top:766.20px;font-size:13px;line-height:13px;letter-spacing:0.2px;color:#1f1f1f">Purchase Agree<span style="letter-spacing:-0.6px">..</span>.</div>
<div class="abs" style="left:1250px;top:766.20px;font-size:13px;line-height:13px;letter-spacing:0.2px;color:#1f1f1f">No</div>
<div class="abs" style="left:1371px;top:766.20px;font-size:13px;line-height:13px;letter-spacing:0.2px;color:#1f1f1f">70,000.00</div>
<div class="abs" style="left:1484px;top:766.20px;font-size:13px;line-height:13px;letter-spacing:0.2px;color:#1f1f1f">EUR</div>
<div class="abs" style="left:1606px;top:766.20px;font-size:13px;line-height:13px;letter-spacing:0.2px;color:#1f1f1f">Corey Taylor</div>
<div class="abs" style="left:1747px;top:766.20px;font-size:13px;line-height:13px;letter-spacing:0.72px;color:#1f1f1f">03/04/2026</div>
<div class="badge" style="left:940px;top:763px;color:#d21d45;border-color:#d21d45;background:#efdadf">Archived</div>
<div class="abs" style="left:298px;top:798px;width:1525px;height:46px;background:#fde5cc"></div>
<div class="abs" style="left:298px;top:844px;width:1525px;height:1px;background:rgba(0,0,0,0.125)"></div>
<div class="abs" style="left:313px;top:813.5px;width:15px;height:15px;background:#ef7d00"></div>
<svg class="abs" style="left:313px;top:813.5px;width:15px;height:15px" viewBox="0 0 15 15"><path d="M3.3 7.8 L6.2 10.6 L11.8 4.6" fill="none" stroke="#fff" stroke-width="1.7"/></svg>
<div class="abs" style="left:359px;top:813.20px;font-size:13px;line-height:13px;letter-spacing:0.2px;color:#1f1f1f">00000020</div>
<div class="abs" style="left:471px;top:813.20px;font-size:13px;line-height:13px;letter-spacing:0.2px;color:#1f1f1f">Timber &amp; Wood Product<span style="letter-spacing:-0.6px">..</span>.</div>
<div class="abs" style="left:659px;top:813.20px;font-size:13px;line-height:13px;letter-spacing:0.2px;color:#1f1f1f">ACME Manufact<span style="letter-spacing:-0.6px">..</span>.</div>
<div class="abs" style="left:800px;top:813.20px;font-size:13px;line-height:13px;letter-spacing:0.2px;color:#1f1f1f">Other</div>
<div class="abs" style="left:1109px;top:813.20px;font-size:13px;line-height:13px;letter-spacing:0.72px;color:#1f1f1f">02/23/2026</div>
<div class="abs" style="left:1250px;top:813.20px;font-size:13px;line-height:13px;letter-spacing:0.2px;color:#1f1f1f">Yes</div>
<div class="abs" style="left:1371px;top:813.20px;font-size:13px;line-height:13px;letter-spacing:0.2px;color:#1f1f1f">471,849.00</div>
<div class="abs" style="left:1484px;top:813.20px;font-size:13px;line-height:13px;letter-spacing:0.2px;color:#1f1f1f">EUR</div>
<div class="abs" style="left:1606px;top:813.20px;font-size:13px;line-height:13px;letter-spacing:0.2px;color:#1f1f1f">Mark Hoffmann</div>
<div class="badge" style="left:940px;top:810px;color:#2e2e2e;border-color:#c2c2c2;background:#d9d9d9">Inactive</div>
<div class="abs" style="left:298px;top:845px;width:1525px;height:46px;background:#f2f2f2"></div>
<div class="abs" style="left:298px;top:891px;width:1525px;height:1px;background:rgba(0,0,0,0.125)"></div>
<div class="abs" style="left:313px;top:860.5px;width:15px;height:15px;border:1.5px solid #262626;background:#fff"></div>
<div class="abs" style="left:359px;top:860.20px;font-size:13px;line-height:13px;letter-spacing:0.2px;color:#1f1f1f">00000019</div>
<div class="abs" style="left:471px;top:860.20px;font-size:13px;line-height:13px;letter-spacing:0.2px;color:#1f1f1f">NEW contract for metal<span style="letter-spacing:-0.6px">..</span>.</div>
<div class="abs" style="left:659px;top:860.20px;font-size:13px;line-height:13px;letter-spacing:0.2px;color:#1f1f1f">ACME Manufact<span style="letter-spacing:-0.6px">..</span>.</div>
<div class="abs" style="left:800px;top:860.20px;font-size:13px;line-height:13px;letter-spacing:0.2px;color:#1f1f1f">Purchase Agree<span style="letter-spacing:-0.6px">..</span>.</div>
<div class="abs" style="left:1109px;top:860.20px;font-size:13px;line-height:13px;letter-spacing:0.72px;color:#1f1f1f">01/31/2029</div>
<div class="abs" style="left:1250px;top:860.20px;font-size:13px;line-height:13px;letter-spacing:0.2px;color:#1f1f1f">Yes</div>
<div class="abs" style="left:1371px;top:860.20px;font-size:13px;line-height:13px;letter-spacing:0.2px;color:#1f1f1f">120,000.00</div>
<div class="abs" style="left:1484px;top:860.20px;font-size:13px;line-height:13px;letter-spacing:0.2px;color:#1f1f1f">EUR</div>
<div class="abs" style="left:1606px;top:860.20px;font-size:13px;line-height:13px;letter-spacing:0.2px;color:#1f1f1f">Yuliya Kovtanyuk</div>
<div class="badge" style="left:940px;top:857px;color:#2e2e2e;border-color:#c2c2c2;background:#d9d9d9">Inactive</div>
<div class="abs" style="left:1823px;top:469px;width:19px;height:420px;background:#fafafa;border-left:1px solid #eeeeee"></div>
<svg class="abs" style="left:1827px;top:475px;width:11px;height:8px" viewBox="0 0 11 8"><path d="M0.5 7.5 L5.5 0.5 L10.5 7.5 Z" fill="#8a8a8a"/></svg>
<div class="abs" style="left:1782px;top:366px;width:105px;height:105px;background:#fff;border-radius:4px;box-shadow:0 2px 8px rgba(0,0,0,.25)"></div>
<div class="abs" style="left:1782px;top:374px;width:105px;height:45px;background:#e4e4e4"></div>
<div class="abs" style="left:1797px;top:387.93px;font-size:15.8px;line-height:15.8px;color:#2a2a2a">Deactivate</div>
<div class="abs" style="left:1797px;top:432.63px;font-size:15.8px;line-height:15.8px;color:#2a2a2a">Archive</div>
<div class="abs" style="left:0;top:871px;width:1889px;height:1px;background:#dcdcdc"></div>
<div class="abs" style="left:1888px;top:0;width:1px;height:871px;background:#fbfbfb"></div>
</body></html>
